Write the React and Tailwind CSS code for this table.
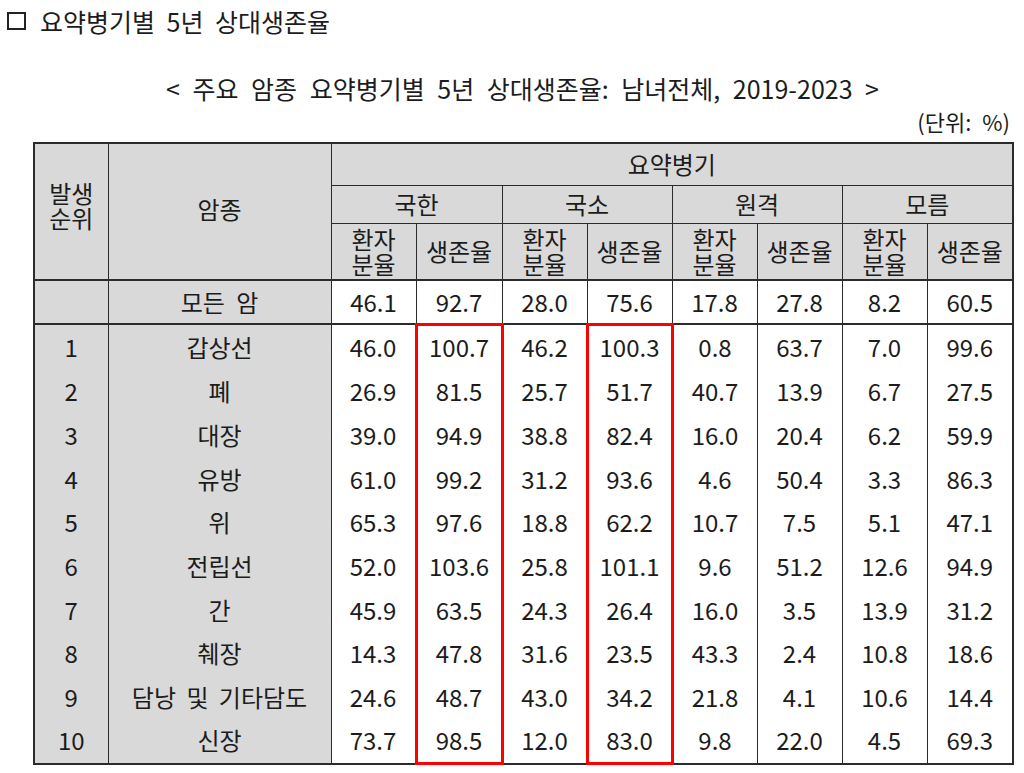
import React from "react";

const rows = [
  ["1", "갑상선", "46.0", "100.7", "46.2", "100.3", "0.8", "63.7", "7.0", "99.6"],
  ["2", "폐", "26.9", "81.5", "25.7", "51.7", "40.7", "13.9", "6.7", "27.5"],
  ["3", "대장", "39.0", "94.9", "38.8", "82.4", "16.0", "20.4", "6.2", "59.9"],
  ["4", "유방", "61.0", "99.2", "31.2", "93.6", "4.6", "50.4", "3.3", "86.3"],
  ["5", "위", "65.3", "97.6", "18.8", "62.2", "10.7", "7.5", "5.1", "47.1"],
  ["6", "전립선", "52.0", "103.6", "25.8", "101.1", "9.6", "51.2", "12.6", "94.9"],
  ["7", "간", "45.9", "63.5", "24.3", "26.4", "16.0", "3.5", "13.9", "31.2"],
  ["8", "췌장", "14.3", "47.8", "31.6", "23.5", "43.3", "2.4", "10.8", "18.6"],
  ["9", "담낭 및 기타담도", "24.6", "48.7", "43.0", "34.2", "21.8", "4.1", "10.6", "14.4"],
  ["10", "신장", "73.7", "98.5", "12.0", "83.0", "9.8", "22.0", "4.5", "69.3"],
];

const all = ["46.1", "92.7", "28.0", "75.6", "17.8", "27.8", "8.2", "60.5"];

const B = "border-[#2b2b2b]";

function Two({ a, b }) {
  return (
    <div className="leading-[25px]">
      {a}
      <br />
      {b}
    </div>
  );
}

export default function App() {
  return (
    <div
      className="w-[1024px] h-[773px] bg-white text-[#1c1c1c] overflow-hidden"
      style={{ fontFamily: '"Noto Sans CJK KR", "Noto Sans", sans-serif' }}
    >
      <div className="h-[42px] flex items-center pl-[7px] text-[25px] leading-[32px] [word-spacing:6px]">
        <span className="inline-block w-[19px] h-[18px] border-2 border-[#222] mr-[14px]"></span>
        <span>요약병기별 5년 상대생존율</span>
      </div>
      <div className="mt-[30px] h-[32px] w-[979px] ml-[33px] text-center text-[25px] leading-[32px] [word-spacing:7px]">
        &lt; 주요 암종 요약병기별 5년 상대생존율: 남녀전체, 2019-2023 &gt;
      </div>
      <div className="mt-[5px] h-[24px] w-[979px] ml-[33px] text-right text-[22px] leading-[24px] pr-[2px] [word-spacing:6px]">
        (단위: %)
      </div>
      <div className="mt-[9px] ml-[33px]">
        <table className={`w-[979px] table-fixed border-collapse border-2 ${B} text-[24px] text-center`}>
          <colgroup>
            <col className="w-[74px]" />
            <col className="w-[223px]" />
            <col className="w-[85px]" />
            <col className="w-[86px]" />
            <col className="w-[85px]" />
            <col className="w-[85px]" />
            <col className="w-[85px]" />
            <col className="w-[85px]" />
            <col className="w-[85px]" />
            <col className="w-[86px]" />
          </colgroup>
          <thead>
            <tr className="h-[42px]">
              <td rowSpan={3} className={`bg-[#d9d9d9] border ${B} align-middle p-0`}>
                <div className="pb-[14px]">
                  <Two a="발생" b="순위" />
                </div>
              </td>
              <td rowSpan={3} className={`bg-[#d9d9d9] border ${B} align-middle p-0 leading-[32px]`}>
                <div className="pb-[6px]">암종</div>
              </td>
              <td colSpan={8} className={`bg-[#d9d9d9] border ${B} p-0 leading-[32px]`}>
                요약병기
              </td>
            </tr>
            <tr className="h-[38px]">
              {["국한", "국소", "원격", "모름"].map((t) => (
                <td key={t} colSpan={2} className={`bg-[#d9d9d9] border ${B} p-0 leading-[32px]`}>
                  {t}
                </td>
              ))}
            </tr>
            <tr className="h-[57px]">
              {[0, 1, 2, 3].map((i) => (
                <React.Fragment key={i}>
                  <td className={`bg-[#d9d9d9] border ${B} p-0`}>
                    <Two a="환자" b="분율" />
                  </td>
                  <td className={`bg-[#d9d9d9] border ${B} p-0 leading-[32px]`}>생존율</td>
                </React.Fragment>
              ))}
            </tr>
            <tr className="h-[44px]">
              <td className={`bg-[#d9d9d9] border border-t-2 ${B} p-0`}></td>
              <td className={`bg-[#d9d9d9] border border-t-2 ${B} p-0 leading-[32px] [word-spacing:6px]`}>
                모든 암
              </td>
              {all.map((v, i) => (
                <td key={i} className={`bg-white border border-t-2 ${B} p-0 leading-[32px]`}>
                  {v}
                </td>
              ))}
            </tr>
          </thead>
          <tbody>
            {rows.map((r, ri) => {
              const first = ri === 0;
              const last = ri === rows.length - 1;
              return (
                <tr key={ri} className={first ? "h-[47px]" : "h-[43.67px]"}>
                  {r.map((v, ci) => {
                    const gray = ci < 2;
                    const red = ci === 3 || ci === 5;
                    let cls = `px-0 pt-0 pb-[3px] leading-[32px] border-x ${B} `;
                    if (first) cls += `border-t-2 ${B} `;
                    if (gray) cls += "bg-[#d9d9d9] ";
                    else cls += "bg-white ";
                    if (ci === 1) cls += "[word-spacing:5px] ";
                    if (red) {
                      cls += "border-x-[3px] border-x-[#ff0000] ";
                      if (first) cls += "border-t-[3px] border-t-[#ff0000] ";
                      if (last) cls += "border-b-[3px] border-b-[#ff0000] ";
                    }
                    return (
                      <td key={ci} className={cls}>
                        {v}
                      </td>
                    );
                  })}
                </tr>
              );
            })}
          </tbody>
        </table>
      </div>
    </div>
  );
}
